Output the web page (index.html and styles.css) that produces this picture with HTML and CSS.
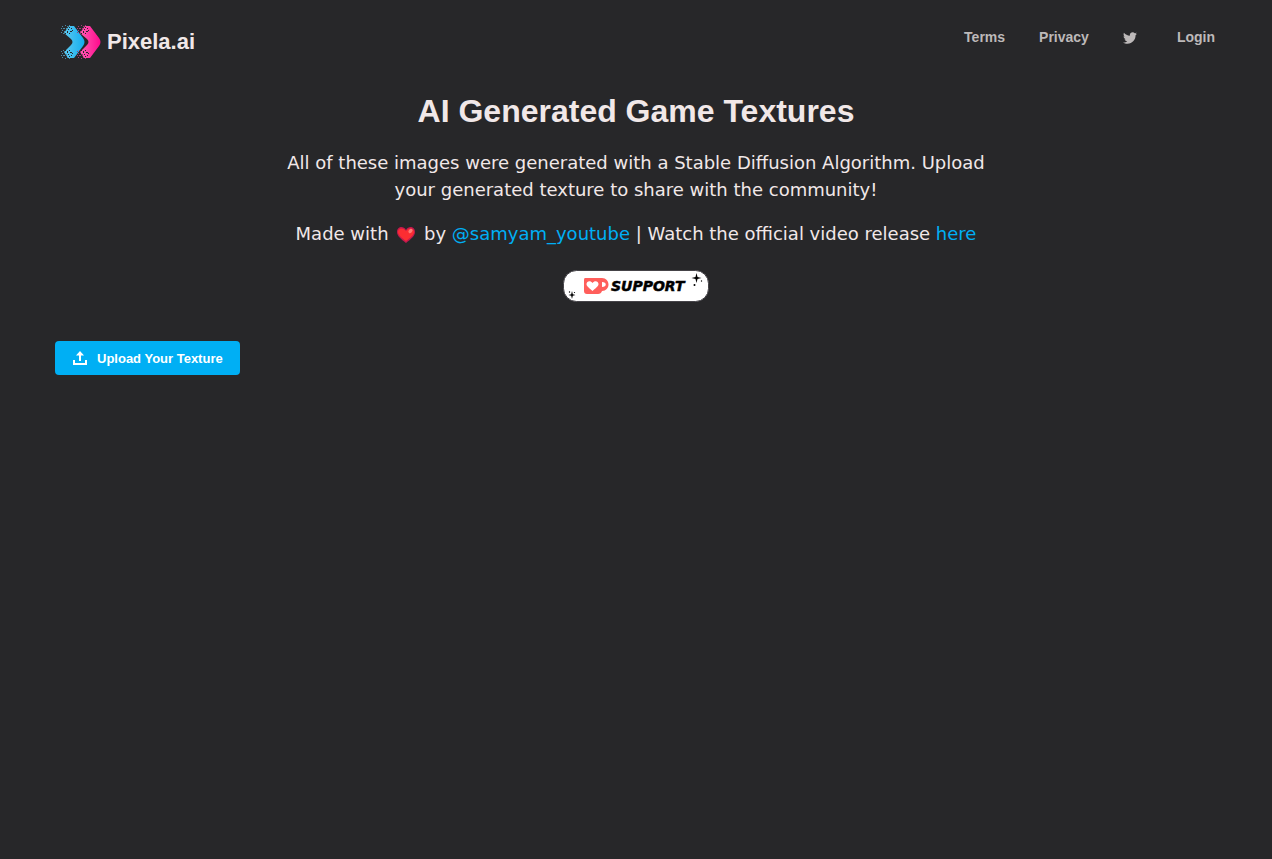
FILE: index.html
```
<!DOCTYPE html>
<html lang="en">
<head>
<meta charset="utf-8">
<meta name="viewport" content="width=device-width, initial-scale=1">
<title>Pixela.ai</title>
<link rel="stylesheet" href="styles.css">
</head>
<body>
<header class="header">
  <a class="brand" href="#">
    <svg class="brand-logo" viewBox="0 0 41 34" aria-hidden="true">
      <defs>
        <linearGradient id="blue" x1="0" x2="1"><stop offset="0" stop-color="#5cc8ef"/><stop offset="1" stop-color="#12aef0"/></linearGradient>
        <linearGradient id="pink" x1="0" x2="1"><stop offset="0" stop-color="#ff5cb4"/><stop offset="1" stop-color="#ff0a8c"/></linearGradient>
        <path id="chevron" d="M9 1h5l9 12q3 4 0 8L14 33H8L4 27l7-7q3-3 0-6L4 8z"/>
        <path id="dust" d="M2 1h1v1H2zM5 0h1v1H5zM7 1h1v1H7zM1 3h1v1H1zM3 3h2v1H3zM6 3h1v2H6zM2 5h1v1H2zM4 6h1v1H4zM1 7h1v1H1zM3 8h1v1H3zM9 0h1v1H9z"/>
        <path id="holes" d="M9 2h1v1H9zM11 3h1v1h-1zM8 4h1v1H8zM10 6h2v1h-2zM7 6h1v2H7zM12 5h1v1h-1zM9 8h1v1H9zM5 8h1v1H5z"/>
      </defs>
      <use href="#chevron" fill="url(#blue)"/>
      <use href="#dust" fill="#4b8ba6"/>
      <use href="#holes" fill="#272729"/>
      <use href="#dust" fill="#4b8ba6" transform="translate(0 34) scale(1 -1)"/>
      <use href="#holes" fill="#272729" transform="translate(0 34) scale(1 -1)"/>
      <use href="#chevron" x="16" fill="url(#pink)"/>
      <use href="#dust" x="16" fill="#a53a78"/>
      <use href="#holes" x="16" fill="#272729"/>
      <use href="#dust" fill="#a53a78" transform="translate(16 34) scale(1 -1)"/>
      <use href="#holes" fill="#272729" transform="translate(16 34) scale(1 -1)"/>
    </svg>
    <span>Pixela.ai</span>
  </a>
  <nav class="nav">
    <a href="#">Terms</a>
    <a href="#">Privacy</a>
    <a href="#" class="nav-twitter" aria-label="Twitter">
      <svg viewBox="0 0 512 512" width="14" height="14" aria-hidden="true"><path fill="currentColor" d="M459 152c.3 4.500.3 9 .3 13.600 0 138.700-105.600 298.600-298.600 298.600-59.400 0-114.700-17.200-161.100-47.100 8.400 1 16.600 1.300 25.300 1.300 49 0 94.200-16.600 130.300-44.800-46.100-1-84.800-31.200-98.100-72.800 6.500 1 13 1.600 19.800 1.600 9.400 0 18.800-1.300 27.600-3.600-48.100-9.700-84.100-52-84.100-103v-1.300c14 7.800 30.200 12.700 47.400 13.300-28.300-18.800-46.800-51-46.800-87.400 0-19.500 5.200-37.400 14.300-53 51.700 63.700 129.300 105.300 216.400 109.800-1.600-7.800-2.600-15.900-2.600-24 0-57.800 46.800-104.900 104.900-104.900 30.200 0 57.500 12.700 76.700 33.100 23.700-4.500 46.500-13.300 66.600-25.300-7.800 24.400-24.400 44.800-46.100 57.800 21.100-2.300 41.600-8.100 60.400-16.200-14.300 20.800-32.200 39.300-52.600 54.300z"/></svg>
    </a>
    <a href="#">Login</a>
  </nav>
</header>
<main class="main">
  <section class="hero">
    <h1>AI Generated Game Textures</h1>
    <p>All of these images were generated with a Stable Diffusion Algorithm. Upload your generated texture to share with the community!</p>
    <p>Made with
      <svg class="heart" viewBox="0 0 20 18" role="img" aria-label="love"><path fill="#c3194e" d="M10 17C5 13 1 10 1 6c0-5 6-7 9-2 3-5 9-3 9 2 0 4-4 7-9 11z"/><path fill="#fb2d32" d="M10 15C6 12 2 9 2 6c0-4 5-5 8-1 3-4 8-3 8 1 0 3-4 6-8 9z"/><ellipse cx="14.500" cy="5" rx="2.400" ry="1.700" fill="#ff7b76" transform="rotate(-45 14.500 5)"/></svg>
      by <a href="#">@samyam_youtube</a> | Watch the official video release <a href="#">here</a></p>
    <a class="support" href="#" aria-label="Support">
      <svg viewBox="0 0 148 34" width="148" height="34">
        <rect x="1.500" y="1.500" width="145" height="31" rx="13" fill="#fff" stroke="#454348"/>
        <path fill="#ff5e5b" fill-rule="evenodd" d="M23 9h17c4 0 6.500 3 6.500 6.500S44 22 40 22q-1 3-4 3H25q-3 0-3-3V11q0-2 1-2zm17 4v5c5 0 5-5 0-5z"/>
        <path fill="#fff" d="M30.500 22c-3-3-6-4.500-6-7 0-3 4-4 6-1 2-3 6-2 6 1 0 2.500-3 4-6 7z"/>
        <text class="support-text" x="49" y="22">SUPPORT</text>
        <path fill="#000" d="M134.500 4l1 4 4 1-4 1-1 4-1-4-4-1 4-1zM10 22l.8 3.200 2.700.8-2.700.8L10 30l-.8-3.200L6.500 26l2.700-.8z"/>
        <circle cx="132.500" cy="16" r="1"/><circle cx="139.500" cy="12" r=".7"/><circle cx="7.500" cy="23" r=".7"/><circle cx="12.500" cy="23.500" r=".6"/>
      </svg>
    </a>
  </section>
  <button class="upload" type="button">
    <svg viewBox="0 0 14 14" width="14" height="14" aria-hidden="true"><path fill="none" stroke="currentColor" stroke-width="2" d="M1 9v4h12V9M7 10V3"/><path fill="currentColor" d="M7 0l4 4.500H3z"/></svg>
    Upload Your Texture
  </button>
</main>
</body>
</html>
```
FILE: styles.css
```
* { box-sizing: border-box; }
body {
  margin: 0;
  background: #272729;
  color: #f1e8e8;
  font-family: Verdana, "DejaVu Sans", sans-serif;
  font-size: 18px;
  line-height: 27px;
}
a { color: #00aff4; text-decoration: none; }
.header {
  display: flex;
  justify-content: space-between;
  align-items: flex-start;
  padding: 24px 57px 0 60px;
  font-family: "Liberation Sans", Arial, sans-serif;
  font-weight: 700;
}
.brand {
  display: flex;
  align-items: center;
  gap: 6px;
  height: 36px;
  color: #f1e8e8;
  font-size: 22px;
  line-height: 24px;
}
.brand-logo { width: 41px; height: 34px; }
.nav { display: flex; align-items: center; gap: 34px; font-size: 14px; }
.nav a { color: #bdb9b9; }
.nav-twitter { display: flex; margin-right: 6px; }
.main { padding: 0 55px; }
.hero {
  display: flex;
  flex-direction: column;
  align-items: center;
  text-align: center;
}
h1 {
  margin: 29px 0 16px;
  font: 700 32px/44px "Liberation Sans", Arial, sans-serif;
}
.hero p { max-width: 700px; margin: 0 0 17px; }
.heart { width: 20px; height: 18px; margin: 0 2px; vertical-align: -4px; }
.support { display: flex; margin: 5px 0 38px; }
.support-text {
  font: italic 700 14px "DejaVu Sans", Verdana, sans-serif;
  fill: #000;
  stroke: #000;
  stroke-width: 0.5px;
}
.upload {
  display: flex;
  align-items: center;
  gap: 10px;
  height: 34px;
  padding: 0 17px 0 18px;
  border: 0;
  border-radius: 4px;
  background: #00aff4;
  color: #fff;
  font: 700 13px "Liberation Sans", Arial, sans-serif;
  cursor: pointer;
}
```
